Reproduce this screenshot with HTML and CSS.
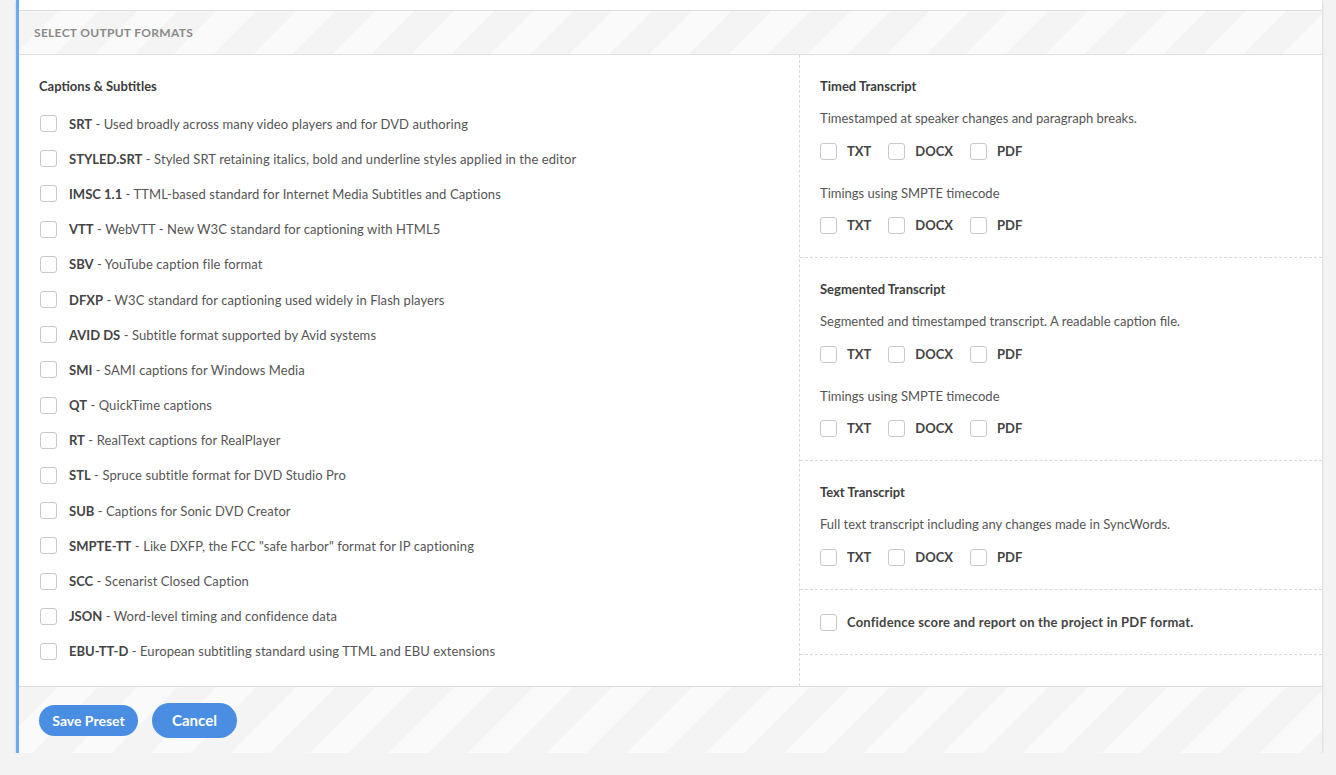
FILE: index.html
```html
<!DOCTYPE html>
<html lang="en">
<head>
<meta charset="utf-8">
<title>Select output formats</title>
<link rel="stylesheet" href="styles.css">
</head>
<body>
<div class="card">
  <div class="card-top"></div>
  <div class="panel-header">Select Output Formats</div>
  <div class="panel-body">
    <div class="col-left">
      <h3 class="group-title">Captions &amp; Subtitles</h3>
      <ul class="format-list">
        <li class="format-row"><span class="cb"></span><span class="format-text"><b>SRT</b> - Used broadly across many video players and for DVD authoring</span></li>
        <li class="format-row"><span class="cb"></span><span class="format-text"><b>STYLED.SRT</b> - Styled SRT retaining italics, bold and underline styles applied in the editor</span></li>
        <li class="format-row"><span class="cb"></span><span class="format-text"><b>IMSC 1.1</b> - TTML-based standard for Internet Media Subtitles and Captions</span></li>
        <li class="format-row"><span class="cb"></span><span class="format-text"><b>VTT</b> - WebVTT - New W3C standard for captioning with HTML5</span></li>
        <li class="format-row"><span class="cb"></span><span class="format-text"><b>SBV</b> - YouTube caption file format</span></li>
        <li class="format-row"><span class="cb"></span><span class="format-text"><b>DFXP</b> - W3C standard for captioning used widely in Flash players</span></li>
        <li class="format-row"><span class="cb"></span><span class="format-text"><b>AVID DS</b> - Subtitle format supported by Avid systems</span></li>
        <li class="format-row"><span class="cb"></span><span class="format-text"><b>SMI</b> - SAMI captions for Windows Media</span></li>
        <li class="format-row"><span class="cb"></span><span class="format-text"><b>QT</b> - QuickTime captions</span></li>
        <li class="format-row"><span class="cb"></span><span class="format-text"><b>RT</b> - RealText captions for RealPlayer</span></li>
        <li class="format-row"><span class="cb"></span><span class="format-text"><b>STL</b> - Spruce subtitle format for DVD Studio Pro</span></li>
        <li class="format-row"><span class="cb"></span><span class="format-text"><b>SUB</b> - Captions for Sonic DVD Creator</span></li>
        <li class="format-row"><span class="cb"></span><span class="format-text"><b>SMPTE-TT</b> - Like DXFP, the FCC "safe harbor" format for IP captioning</span></li>
        <li class="format-row"><span class="cb"></span><span class="format-text"><b>SCC</b> - Scenarist Closed Caption</span></li>
        <li class="format-row"><span class="cb"></span><span class="format-text"><b>JSON</b> - Word-level timing and confidence data</span></li>
        <li class="format-row"><span class="cb"></span><span class="format-text"><b>EBU-TT-D</b> - European subtitling standard using TTML and EBU extensions</span></li>
      </ul>
    </div>
    <div class="col-right">
      <section class="section">
        <h3 class="group-title">Timed Transcript</h3>
        <p class="desc">Timestamped at speaker changes and paragraph breaks.</p>
        <div class="opts"><span class="opt"><span class="cb"></span>TXT</span><span class="opt"><span class="cb"></span>DOCX</span><span class="opt"><span class="cb"></span>PDF</span></div>
        <p class="desc desc-sub">Timings using SMPTE timecode</p>
        <div class="opts"><span class="opt"><span class="cb"></span>TXT</span><span class="opt"><span class="cb"></span>DOCX</span><span class="opt"><span class="cb"></span>PDF</span></div>
      </section>
      <section class="section">
        <h3 class="group-title">Segmented Transcript</h3>
        <p class="desc">Segmented and timestamped transcript. A readable caption file.</p>
        <div class="opts"><span class="opt"><span class="cb"></span>TXT</span><span class="opt"><span class="cb"></span>DOCX</span><span class="opt"><span class="cb"></span>PDF</span></div>
        <p class="desc desc-sub">Timings using SMPTE timecode</p>
        <div class="opts"><span class="opt"><span class="cb"></span>TXT</span><span class="opt"><span class="cb"></span>DOCX</span><span class="opt"><span class="cb"></span>PDF</span></div>
      </section>
      <section class="section">
        <h3 class="group-title">Text Transcript</h3>
        <p class="desc">Full text transcript including any changes made in SyncWords.</p>
        <div class="opts"><span class="opt"><span class="cb"></span>TXT</span><span class="opt"><span class="cb"></span>DOCX</span><span class="opt"><span class="cb"></span>PDF</span></div>
      </section>
      <section class="section section-single">
        <div class="opts"><span class="opt opt-wide"><span class="cb"></span>Confidence score and report on the project in PDF format.</span></div>
      </section>
    </div>
  </div>
  <div class="panel-footer">
    <button class="btn btn-sm">Save Preset</button>
    <button class="btn btn-lg">Cancel</button>
  </div>
</div>
</body>
</html>
```

FILE: styles.css
```css
* { box-sizing: border-box; }

html, body {
  margin: 0;
  padding: 0;
  background: #f3f3f3;
  font-family: "Lato", "Liberation Sans", sans-serif;
  font-size: 13px;
  color: #555;
}

.card {
  margin-left: 16px;
  width: 1306px;
  background: #fff;
  border-left: 3px solid #6aaaf7;
  border-radius: 0 0 3px 0;
  box-shadow: 0 1px 3px rgba(0, 0, 0, 0.18);
}

.card-top {
  height: 10px;
  background: #fff;
}

.panel-header {
  height: 45px;
  border-top: 1px solid #dedede;
  border-bottom: 1px solid #dedede;
  background: repeating-linear-gradient(135deg, #f4f4f4 0 28px, #fafafa 28px 56px);
  padding-left: 15px;
  line-height: 43px;
  font-size: 12px;
  font-weight: 700;
  text-transform: uppercase;
  color: #8a8a8a;
  letter-spacing: 0.3px;
}

.panel-body {
  display: grid;
  grid-template-columns: 780px 1fr;
}

.col-left {
  padding: 21px 20px 17px 20px;
}

.group-title {
  margin: 0;
  font-size: 13px;
  line-height: 20px;
  font-weight: 700;
  color: #3d3d3d;
}

.format-list {
  list-style: none;
  margin: 10px 0 0 0;
  padding: 0;
}

.format-row {
  height: 35.2px;
  display: flex;
  align-items: center;
}

.cb {
  display: inline-block;
  flex: none;
  width: 17px;
  height: 17px;
  border: 1px solid #c9c9c9;
  border-radius: 3px;
  background: #fff;
}

.format-row .cb {
  margin-left: 1px;
  margin-right: 12px;
}

.format-text {
  line-height: 20px;
  color: #555;
  letter-spacing: 0.08px;
}

.format-text b {
  color: #444;
  font-weight: 700;
  letter-spacing: 0;
}

.col-right {
  border-left: 1px dashed #d9d9d9;
}

.section {
  padding: 21px 20px 22px 20px;
  border-bottom: 1px dashed #d9d9d9;
}

.section-single {
  padding: 22px 20px 22px 20px;
}

.desc {
  margin: 12px 0 0 0;
  line-height: 20px;
  color: #555;
}

.desc-sub {
  margin-top: 22px;
}

.opts {
  display: flex;
  align-items: center;
  height: 20px;
  margin-top: 13px;
}

.desc-sub + .opts {
  margin-top: 12px;
}

.section-single .opts {
  margin-top: 0;
}

.opt {
  display: inline-flex;
  align-items: center;
  margin-right: 17px;
  font-weight: 700;
  color: #444;
}

.opt .cb {
  margin-right: 10px;
}

.opt-wide {
  letter-spacing: 0.2px;
}

.panel-footer {
  height: 67px;
  border-top: 1px solid #dcdcdc;
  background: repeating-linear-gradient(135deg, #f4f4f4 0 28px, #fafafa 28px 56px);
  display: flex;
  align-items: center;
  gap: 14px;
  padding-left: 20px;
  border-radius: 0 0 3px 0;
}

.btn {
  border: none;
  background: #4a8ee3;
  color: #fff;
  font-family: "Lato", "Liberation Sans", sans-serif;
  font-weight: 700;
  cursor: pointer;
}

.btn-sm {
  height: 31px;
  width: 99px;
  border-radius: 16px;
  font-size: 14px;
  padding: 0;
}

.btn-lg {
  height: 35px;
  width: 85px;
  border-radius: 18px;
  font-size: 15px;
  padding: 0;
}
```
